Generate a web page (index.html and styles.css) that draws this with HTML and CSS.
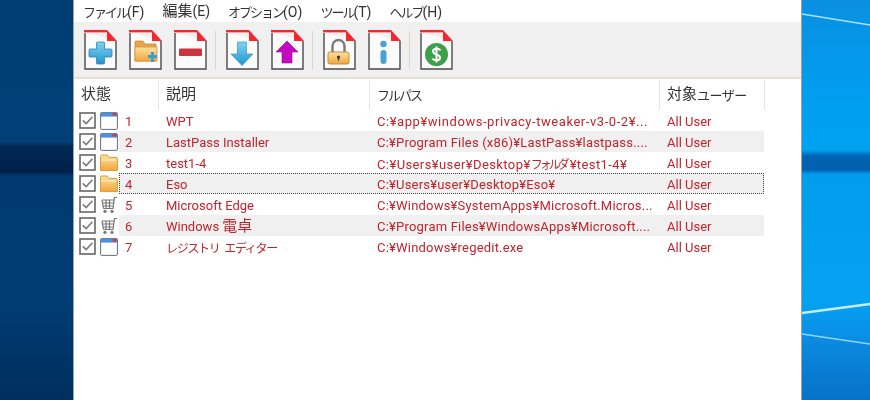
FILE: index.html
```html
<!DOCTYPE html>
<html lang="ja">
<head>
<meta charset="utf-8">
<title>Startup list</title>
<link rel="stylesheet" href="styles.css">
</head>
<body>
<svg class="defs" width="0" height="0" aria-hidden="true">
  <defs>
    <linearGradient id="blue" x1="0" y1="0" x2="0" y2="1"><stop offset="0" stop-color="#7fd3f2"/><stop offset="1" stop-color="#1e96cf"/></linearGradient>
    <linearGradient id="fold" x1="0" y1="0" x2="0" y2="1"><stop offset="0" stop-color="#fde3a0"/><stop offset="1" stop-color="#f2a53c"/></linearGradient>
    <symbol id="doc" viewBox="0 0 33 40">
      <path d="M1 2V39H32V11" fill="#fbfbfb" stroke="#4a4a4a" stroke-width="1.4"/>
      <path d="M0 0H23L33 11H23V3H0Z" fill="#fbfbfb"/>
      <path d="M0 0H23V2.400H0Z" fill="#f9262c"/>
      <path d="M23 0L33 11H23Z" fill="#f9262c"/>
    </symbol>
    <symbol id="win" viewBox="0 0 18 18">
      <rect x=".6" y=".6" width="16.800" height="16.800" rx="1" fill="#fdfdfd" stroke="#5f6f80" stroke-width="1"/>
      <rect x=".6" y=".6" width="16.800" height="4" fill="#4f92d8"/>
      <rect x="12.500" y="1" width="4" height="2.400" fill="#d8344a"/>
    </symbol>
    <symbol id="folder" viewBox="0 0 18 18">
      <path d="M.6 16.600V2.400Q.6 1 2 1H7L9 3.400H16Q17.400 3.400 17.400 5V16.600Z" fill="url(#fold)" stroke="#d99a3a" stroke-width="1"/>
      <path d="M1.400 6H16.600" stroke="#fff3cf" stroke-width="1"/>
    </symbol>
    <symbol id="cart" viewBox="0 0 18 18">
      <path d="M17 1.500H14.500L13 12.500H3.500M2 4H14M2.500 7H13.600M3 10H13.200M2 4L3.500 12.500M6 4V12.500M9.500 4V12.500" fill="none" stroke="#777" stroke-width="1.200"/>
      <circle cx="5" cy="15.300" r="1.600" fill="#777"/>
      <circle cx="12" cy="15.300" r="1.600" fill="#777"/>
    </symbol>
    <symbol id="check" viewBox="0 0 17 17">
      <rect x="1" y="1" width="15" height="15" fill="#fff" stroke="#666" stroke-width="1.600"/>
      <path d="M3.800 8.400L7.200 11.600L13.400 4.800" fill="none" stroke="#7a7a7a" stroke-width="1.600"/>
    </symbol>
  </defs>
</svg>

<div class="desktop desktop-left"></div>

<main class="app">
  <nav class="menu">
    <span class="menu-item"><span class="kana">ファイル</span>(F)</span>
    <span class="menu-item"><span class="kanji">編集</span>(E)</span>
    <span class="menu-item"><span class="kana">オプション</span>(O)</span>
    <span class="menu-item"><span class="kana">ツール</span>(T)</span>
    <span class="menu-item"><span class="kana">ヘルプ</span>(H)</span>
  </nav>

  <div class="toolbar">
    <div class="tool-group">
      <svg class="tool" viewBox="0 0 33 40"><use href="#doc"/><path d="M12.500 13Q12.500 12 13.500 12H19.500Q20.500 12 20.500 13V19H27Q28 19 28 20V26Q28 27 27 27H20.500V33Q20.500 34 19.500 34H13.500Q12.500 34 12.500 33V27H6Q5 27 5 26V20Q5 19 6 19H12.500Z" fill="url(#blue)" stroke="#2a86b8" stroke-width=".8"/></svg>
      <svg class="tool" viewBox="0 0 33 40"><use href="#doc"/><path d="M6 31V12Q6 11 7 11H14L16 14H27V31Z" fill="#e7a54a" stroke="#c98a35" stroke-width=".8"/><path d="M6 31V17H28V31Z" fill="url(#fold)" stroke="#d2923a" stroke-width=".8"/><path d="M19 25H22V22H25V25H28V28H25V32H22V28H19Z" fill="#3c9ed0"/></svg>
      <svg class="tool" viewBox="0 0 33 40"><use href="#doc"/><rect x="5" y="18.500" width="23" height="7.500" rx="1" fill="#cc3540"/></svg>
    </div>
    <span class="tool-sep"></span>
    <div class="tool-group">
      <svg class="tool" viewBox="0 0 33 40"><use href="#doc"/><path d="M11.500 12H20.500V24H27L16 35.500L5 24H11.500Z" fill="url(#blue)" stroke="#2a86b8" stroke-width=".6"/></svg>
      <svg class="tool" viewBox="0 0 33 40"><use href="#doc"/><path d="M16 11L27 22H21V33H11V22H5Z" fill="#c409c0" stroke="#8f1090" stroke-width=".6"/></svg>
    </div>
    <span class="tool-sep"></span>
    <div class="tool-group">
      <svg class="tool" viewBox="0 0 33 40"><use href="#doc"/><path d="M9.500 22V16A6 6 0 0 1 21.500 16V22" fill="none" stroke="#7a7a7a" stroke-width="2.400"/><rect x="5" y="22" width="21" height="12" rx="2" fill="url(#fold)" stroke="#c98a35"/><circle cx="15.500" cy="27" r="1.600" fill="#332"/><rect x="14.800" y="27" width="1.400" height="3.500" fill="#332"/></svg>
      <svg class="tool" viewBox="0 0 33 40"><use href="#doc"/><circle cx="15.500" cy="14" r="3.200" fill="#4aa3d6"/><rect x="12.500" y="20" width="6" height="14" rx="3" fill="#4aa3d6"/></svg>
    </div>
    <span class="tool-sep"></span>
    <div class="tool-group">
      <svg class="tool" viewBox="0 0 33 40"><use href="#doc"/><circle cx="16.500" cy="24.500" r="11.500" fill="#3da04a"/><path d="M20.500 20.500Q19.500 18.800 16.500 18.800Q13 18.800 13 21.300Q13 23.500 16.500 24.500Q20 25.500 20 27.800Q20 30.300 16.500 30.300Q13.500 30.300 12.500 28.500M16.500 16.500V32.500" fill="none" stroke="#fff" stroke-width="2"/></svg>
    </div>
  </div>

  <div class="list-head">
    <span class="head-cell head-state"><span class="kanji">状態</span></span>
    <span class="head-cell head-desc"><span class="kanji">説明</span></span>
    <span class="head-cell head-path"><span class="kana">フルパス</span></span>
    <span class="head-cell head-user"><span class="kanji">対象</span><span class="kana-wide">ユーザー</span></span>
  </div>

  <ul class="rows">
    <li class="row">
      <span class="row-state"><svg class="check"><use href="#check"/></svg><svg class="kind"><use href="#win"/></svg></span>
      <span class="row-body"><span class="c-num">1</span><span class="c-desc">WPT</span><span class="c-path c-path-wide">C:¥app¥windows-privacy-tweaker-v3-0-2¥...</span><span class="c-user">All User</span></span>
    </li>
    <li class="row row-alt">
      <span class="row-state"><svg class="check"><use href="#check"/></svg><svg class="kind"><use href="#win"/></svg></span>
      <span class="row-body"><span class="c-num">2</span><span class="c-desc">LastPass Installer</span><span class="c-path">C:¥Program Files (x86)¥LastPass¥lastpass....</span><span class="c-user">All User</span></span>
    </li>
    <li class="row">
      <span class="row-state"><svg class="check"><use href="#check"/></svg><svg class="kind"><use href="#folder"/></svg></span>
      <span class="row-body"><span class="c-num">3</span><span class="c-desc">test1-4</span><span class="c-path c-path-mid">C:¥Users¥user¥Desktop¥<span class="kana-tight">フォルダ</span>¥test1-4¥</span><span class="c-user">All User</span></span>
    </li>
    <li class="row row-alt row-focus">
      <span class="row-state"><svg class="check"><use href="#check"/></svg><svg class="kind"><use href="#folder"/></svg></span>
      <span class="row-body"><span class="c-num">4</span><span class="c-desc">Eso</span><span class="c-path">C:¥Users¥user¥Desktop¥Eso¥</span><span class="c-user">All User</span></span>
    </li>
    <li class="row">
      <span class="row-state"><svg class="check"><use href="#check"/></svg><svg class="kind"><use href="#cart"/></svg></span>
      <span class="row-body"><span class="c-num">5</span><span class="c-desc">Microsoft Edge</span><span class="c-path">C:¥Windows¥SystemApps¥Microsoft.Micros...</span><span class="c-user">All User</span></span>
    </li>
    <li class="row row-alt">
      <span class="row-state"><svg class="check"><use href="#check"/></svg><svg class="kind"><use href="#cart"/></svg></span>
      <span class="row-body"><span class="c-num">6</span><span class="c-desc">Windows <span class="kanji">電卓</span></span><span class="c-path">C:¥Program Files¥WindowsApps¥Microsoft....</span><span class="c-user">All User</span></span>
    </li>
    <li class="row">
      <span class="row-state"><svg class="check"><use href="#check"/></svg><svg class="kind"><use href="#win"/></svg></span>
      <span class="row-body"><span class="c-num">7</span><span class="c-desc"><span class="kana-row">レジストリ エディター</span></span><span class="c-path">C:¥Windows¥regedit.exe</span><span class="c-user">All User</span></span>
    </li>
  </ul>
</main>

<div class="desktop desktop-right">
  <svg class="streaks" viewBox="0 0 69 400" preserveAspectRatio="none">
    <path d="M0 14L69 25" stroke="#a9e2fb" stroke-width="1.500" fill="none"/>
    <path d="M0 313L69 304" stroke="#c4ecfc" stroke-width="2.500" fill="none"/>
    <path d="M0 334L69 344" stroke="#8fd6f8" stroke-width="1.500" fill="none"/>
  </svg>
</div>
</body>
</html>
```

FILE: styles.css
```css
* { box-sizing: border-box; }

html, body { height: 100%; }

body {
  margin: 0;
  display: flex;
  width: 870px;
  height: 400px;
  overflow: hidden;
  font-family: Roboto, "Noto Sans CJK JP", sans-serif;
  font-size: 13px;
  background: #fff;
}

.defs { position: absolute; }

.kana { font-size: 13px; letter-spacing: -2px; }
.kanji { font-size: 15px; line-height: 1; }
.kana-wide { font-size: 13px; letter-spacing: -.5px; }
.kana-tight { font-size: 12px; letter-spacing: -3px; margin-right: 3px; }
.kana-row { font-size: 12px; letter-spacing: -1.300px; word-spacing: 3px; }

.desktop { height: 100%; }

.desktop-left {
  width: 73px;
  background: linear-gradient(180deg,
    #003d73 0, #003f78 142px, #002a55 146px, #00204a 172px, #003a70 176px,
    #003c74 300px, #002f5e 400px);
}

.desktop-right {
  flex: 1;
  background: linear-gradient(180deg,
    #0a90e2 0, #009eef 100px, #00a2f0 150px, #0064b2 156px, #005fae 170px,
    #009ded 174px, #05a2f1 300px, #0a8fe6 336px, #0a88de 345px, #0672c8 400px);
}

.streaks { display: block; width: 100%; height: 100%; }

.app {
  width: 729px;
  height: 100%;
  display: flex;
  flex-direction: column;
  background: #fff;
  border-left: 1px solid #9fa6ad;
  border-right: 1px solid #a0a0a0;
  filter: blur(.35px);
}

.menu {
  height: 22px;
  display: flex;
  align-items: center;
  padding-left: 9px;
  color: #333;
  font-size: 14px;
}

.menu-item { margin-right: 18px; white-space: nowrap; }

.toolbar {
  height: 57px;
  display: flex;
  align-items: flex-start;
  padding: 8px 0 0 10px;
  background: #f0f0f0;
  border-bottom: 2px solid #e3dfd3;
}

.tool-group { display: flex; gap: 12px; }

.tool { width: 33px; height: 40px; display: block; }

.tool-sep {
  width: 1px;
  height: 38px;
  margin: 1px 10px 0 8px;
  background: #d8d6cc;
}

.list-head {
  display: flex;
  height: 30px;
  color: #333;
  margin-top: 1px;
}

.head-cell {
  display: flex;
  align-items: center;
  padding: 0 0 2px 7px;
  border-right: 1px solid #e6e6e6;
}

.head-state { width: 85px; }
.head-desc { width: 211px; }
.head-path { width: 290px; }
.head-user { width: 105px; }

.rows { list-style: none; margin: 0; padding: 0; }

.row { display: flex; height: 21px; }

.row-state {
  width: 45px;
  flex: none;
  display: flex;
  align-items: center;
  padding-left: 5px;
}

.check { width: 17px; height: 17px; flex: none; }

.kind { width: 18px; height: 18px; margin-left: 4px; flex: none; }

.row-body {
  width: 645px;
  display: flex;
  align-items: center;
  padding-top: 1px;
  color: #c4242c;
  white-space: nowrap;
}

.row-alt .row-body { background: #f0f0f0; }

.row-focus .row-body { outline: 1px dotted #444; outline-offset: -1px; }

.c-num { width: 47px; padding-left: 6px; }
.c-desc { width: 211px; }
.c-path { width: 290px; letter-spacing: .2px; }
.c-path-wide { letter-spacing: .55px; }
.c-path-mid { letter-spacing: .4px; }
.c-user { width: 97px; }
```
